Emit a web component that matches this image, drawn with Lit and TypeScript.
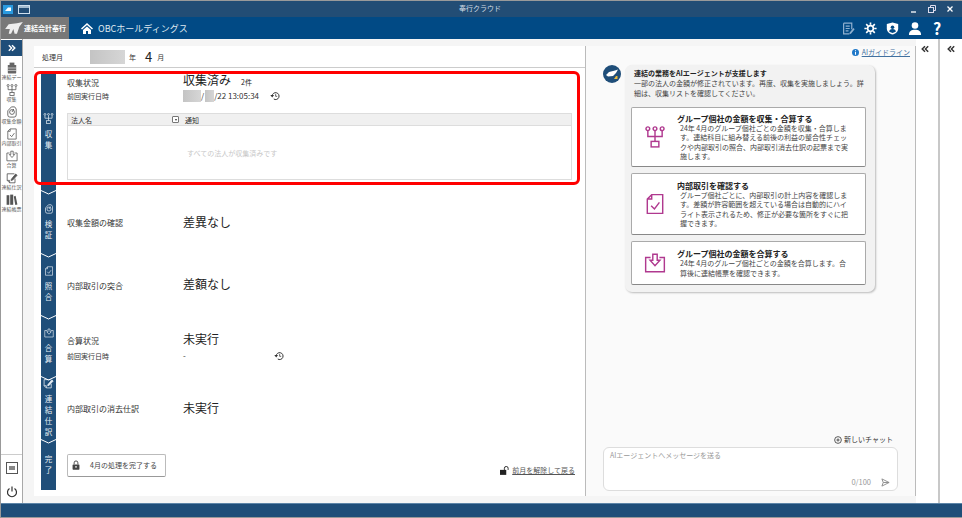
import { LitElement, html, css, svg } from "lit";
import { customElement } from "lit/decorators.js";

const tree = (s: number) => html`<svg width=${s} height=${s} viewBox="0 0 20 20" fill="none" stroke="currentColor" stroke-width="1.3">
  <circle cx="3.5" cy="2.5" r="1.7" /><circle cx="10" cy="2.5" r="1.7" /><circle cx="16.5" cy="2.5" r="1.7" />
  <path d="M3.5 4.5V9.5H16.5V4.5M10 4.5V14" /><rect x="6.5" y="14" width="7" height="5" />
</svg>`;
const docCheck = (s: number) => html`<svg width=${s} height=${s} viewBox="0 0 20 20" fill="none" stroke="currentColor" stroke-width="1.3">
  <path d="M7 1.5H17V18.5H3V5.5Z M7 1.5V5.5H3" /><path d="M6.5 11.5L9.5 14.5L14 8.5" />
</svg>`;
const tray = (s: number) => html`<svg width=${s} height=${s} viewBox="0 0 20 20" fill="none" stroke="currentColor" stroke-width="1.3">
  <path d="M6 5H1.5V18H18.5V5H14" /><path d="M8 2H12V7.5H14.5L10 12.5L5.5 7.5H8Z" />
</svg>`;
const gauge = (s: number) => html`<svg width=${s} height=${s} viewBox="0 0 20 20" fill="none" stroke="currentColor" stroke-width="1.4">
  <path d="M9 1.5H14.5L17 5V15A3.5 3.5 0 0 1 13.5 18.5H6.5A3.5 3.5 0 0 1 3 15V8Z" /><circle cx="10" cy="10" r="4" /><path d="M10 10L13 5" />
</svg>`;
const pen = (s: number) => html`<svg width=${s} height=${s} viewBox="0 0 20 20" fill="none" stroke="currentColor" stroke-width="1.4">
  <path d="M14 3H2V14L6 18H15V11" /><path d="M2 14H6V18" /><path d="M9 12L16 3.5L18.5 5.5L11 13.5L8.5 14Z" fill="currentColor" />
</svg>`;
const books = (s: number) => html`<svg width=${s} height=${s} viewBox="0 0 20 20" fill="currentColor">
  <rect x="1" y="2" width="4.5" height="16" /><rect x="7" y="1" width="5" height="17" /><path d="M13 4L16 3L19 17.5L15.5 18.5Z" />
</svg>`;
const box = (s: number) => html`<svg width=${s} height=${s} viewBox="0 0 20 20" fill="#666">
  <rect x="6" y="1" width="8" height="4" /><rect x="3" y="5" width="14" height="14" rx="1" /><path d="M3 10H17M3 14H17" stroke="#fff" />
</svg>`;
const refresh = html`<svg width="10" height="10" viewBox="0 0 16 16" fill="none" stroke="#333" stroke-width="1.6">
  <path d="M3.5 8A5.5 5.5 0 1 1 6 12.8" /><path d="M0.5 6.5H6.5L3.5 10.5Z" fill="#333" stroke="none" /><path d="M9 5V8.5H11.5" stroke-width="1.2" />
</svg>`;
const lock = (s: number) => html`<svg width=${s} height=${s} viewBox="0 0 16 16" fill="#444">
  <rect x="2.5" y="7" width="11" height="8.5" rx="1" /><path d="M5 7V4.5A3 3 0 0 1 11 4.5V7" fill="none" stroke="#444" stroke-width="1.5" /><circle cx="8" cy="11" r="1.3" fill="#fff" />
</svg>`;
const chevL = html`<svg width="8" height="8" viewBox="0 0 10 10" fill="none" stroke="#333" stroke-width="1.8">
  <path d="M5 1.5L1.5 5L5 8.5M9 1.5L5.5 5L9 8.5" />
</svg>`;

const navItems = [
  { icon: box, label: "連結デー" },
  { icon: tree, label: "収集" },
  { icon: gauge, label: "収集金額" },
  { icon: docCheck, label: "内部取引" },
  { icon: tray, label: "合算" },
  { icon: pen, label: "連結仕訳" },
  { icon: books, label: "連結帳票" },
];

const actions = [
  {
    icon: tree,
    title: "グループ個社の金額を収集・合算する",
    text: "24年 4月のグループ個社ごとの金額を収集・合算します。連結科目に組み替える前後の利益の整合性チェックや内部取引の照合、内部取引消去仕訳の起票まで実施します。",
    h: 60,
  },
  {
    icon: docCheck,
    title: "内部取引を確認する",
    text: "グループ個社ごとに、内部取引の計上内容を確認します。差額が許容範囲を超えている場合は自動的にハイライト表示されるため、修正が必要な箇所をすぐに把握できます。",
    h: 62,
  },
  {
    icon: tray,
    title: "グループ個社の金額を合算する",
    text: "24年 4月のグループ個社ごとの金額を合算します。合算後に連結帳票を確認できます。",
    h: 44,
  },
];

@customElement("app-root")
class AppRoot extends LitElement {
  static styles = css`
    :host {
      display: flex;
      flex-direction: column;
      height: 518px;
      width: 962px;
      overflow: hidden;
      font-family: "Noto Sans CJK JP", "Noto Sans", sans-serif;
      color: #333;
      font-size: 8px;
      background: #fff;
      box-sizing: border-box;
      border-left: 1px solid #999;
      border-bottom: 1px solid #999;
    }
    svg {
      display: block;
      flex: none;
    }
    .titlebar {
      height: 17px;
      background: #224d75;
      border-top: 1px solid #9a9a9a;
      box-sizing: border-box;
      display: flex;
      align-items: center;
      padding: 0 3px 0 2px;
      gap: 5px;
      color: #d5dde5;
      font-size: 7px;
      position: relative;
    }
    .title {
      position: absolute;
      left: 458px;
      top: 2px;
    }
    .winbtns {
      margin-left: auto;
      display: flex;
      gap: 10px;
      padding-right: 5px;
    }
    .appbar {
      height: 22px;
      background: #014a85;
      display: flex;
      align-items: center;
      color: #dfe8f0;
    }
    .logo {
      width: 68px;
      height: 22px;
      background: #787878;
      color: #fff;
      font-weight: 700;
      font-size: 7px;
      display: flex;
      align-items: center;
      gap: 1px;
      padding-left: 4px;
      box-sizing: border-box;
      white-space: nowrap;
    }
    .company {
      font-size: 9px;
      margin-left: 5px;
    }
    .home {
      margin-left: 12px;
    }
    .tools {
      margin-left: auto;
      display: flex;
      align-items: center;
      gap: 9px;
      padding-right: 19px;
      color: #fff;
    }
    .tools .help {
      font-size: 16px;
      font-weight: 700;
      width: 12px;
      text-align: center;
      line-height: 16px;
    }
    .body {
      flex: 1;
      display: flex;
      min-height: 0;
    }
    .nav {
      width: 21px;
      flex: none;
      border-right: 1px solid #a8a8a8;
      display: flex;
      flex-direction: column;
      background: #fff;
    }
    .nav-toggle {
      height: 16px;
      background: #1f4e79;
      color: #fff;
      display: flex;
      align-items: center;
      justify-content: center;
      margin-top: 1px;
    }
    .nav-items {
      padding-top: 6px;
      display: flex;
      flex-direction: column;
      gap: 1px;
    }
    .nav-item {
      height: 21px;
      display: flex;
      flex-direction: column;
      align-items: center;
      color: #555;
      font-size: 5px;
      line-height: 6px;
      white-space: nowrap;
    }
    .nav-bottom {
      margin-top: auto;
      border-top: 1px solid #ccc;
      height: 49px;
      display: flex;
      flex-direction: column;
      align-items: center;
      padding-top: 7px;
      gap: 12px;
      box-sizing: border-box;
    }
    .work {
      display: flex;
      background: #f5f5f5;
      padding: 7px 0 7px 11px;
      width: 893px;
      flex: none;
      box-sizing: border-box;
    }
    .main {
      width: 552px;
      flex: none;
      background: #fff;
      display: flex;
      flex-direction: column;
      padding: 0 6px 0 7px;
      box-sizing: border-box;
      position: relative;
      border-right: 1px solid #bbb;
    }
    .month {
      height: 21px;
      border-bottom: 1px solid #ccc;
      margin: 0 -6px 0 -7px;
      padding-left: 8px;
      display: flex;
      align-items: center;
      font-size: 7px;
    }
    .blur {
      display: inline-block;
      background: linear-gradient(90deg, #c4c4c4, #d6d6d6);
    }
    .blur.year {
      width: 35px;
      height: 14px;
      margin: 0 4px 0 27px;
    }
    .month b {
      font-weight: 400;
      font-size: 13px;
      margin: 0 5px 0 9px;
      color: #222;
    }
    .steps {
      margin-top: 5px;
      display: flex;
      flex-direction: column;
    }
    .row {
      display: flex;
    }
    .step {
      width: 15px;
      flex: none;
      background: #1f4e79;
      color: #e6edf3;
      display: flex;
      flex-direction: column;
      align-items: center;
      justify-content: center;
      position: relative;
      font-size: 7.5px;
      gap: 4px;
      padding-bottom: 2px;
      box-sizing: border-box;
    }
    .step .chev {
      position: absolute;
      top: -1px;
      left: 0;
    }
    .step .chars {
      display: flex;
      flex-direction: column;
      align-items: center;
    }
    .step .chars span {
      display: block;
      height: 11px;
      line-height: 11px;
    }
    .content {
      flex: 1;
      padding-left: 11px;
      display: flex;
      flex-direction: column;
      justify-content: center;
      min-width: 0;
    }
    .line {
      display: grid;
      grid-template-columns: 116px 1fr;
      align-items: center;
    }
    .label {
      font-size: 8px;
      line-height: 11px;
    }
    .sub {
      font-size: 7px;
      line-height: 10px;
    }
    .status {
      font-size: 12px;
      line-height: 16px;
      padding-bottom: 2px;
      color: #222;
    }
    .count {
      font-size: 7px;
      margin-left: 10px;
    }
    .first {
      justify-content: flex-start;
    }
    .first .line:first-child {
      margin: -1px 0 -3px;
    }
    .stamp {
      display: flex;
      align-items: center;
      font-size: 8px;
      height: 13px;
    }
    .stamp svg {
      margin-left: 11px;
    }
    .blur.d1 {
      width: 18px;
      height: 12px;
    }
    .blur.d2 {
      width: 9px;
      height: 12px;
      margin-left: 1px;
    }
    .dash {
      width: 80px;
    }
    .table {
      margin-top: 11px;
      margin-right: 7px;
      border: 1px solid #ddd;
      height: 67px;
      box-sizing: border-box;
      display: flex;
      flex-direction: column;
    }
    .thead {
      height: 11px;
      background: #f0f0f0;
      border-bottom: 1px solid #ddd;
      display: flex;
      align-items: center;
      font-size: 7px;
      padding-left: 3px;
      flex: none;
    }
    .thead .c1 {
      width: 101px;
    }
    .filter {
      width: 7px;
      height: 7px;
      border: 1px solid #777;
      border-radius: 1px;
      box-sizing: border-box;
      background: #fff;
      display: flex;
      align-items: center;
      justify-content: center;
      margin-right: 6px;
    }
    .filter::after {
      content: "";
      border: 1.5px solid transparent;
      border-top: 2px solid #333;
      border-bottom: 0;
    }
    .empty {
      flex: 1;
      color: #c8c8c8;
      font-size: 7px;
      padding-left: 119px;
      display: flex;
      align-items: center;
    }
    .finish {
      flex-direction: row;
      align-items: center;
      justify-content: flex-start;
      padding-right: 4px;
    }
    .finish button {
      width: 99px;
      height: 23px;
      background: #fff;
      border: 1px solid #bbb;
      border-bottom: 1.5px solid #999;
      border-radius: 2px;
      font: inherit;
      font-size: 7px;
      color: #444;
      display: flex;
      align-items: center;
      padding: 0 0 0 3px;
      gap: 9px;
      box-sizing: border-box;
      white-space: nowrap;
    }
    .back {
      margin-left: auto;
      display: flex;
      align-items: center;
      gap: 2px;
      font-size: 7px;
      color: #555;
      text-decoration: underline;
      margin-top: 10px;
    }
    .highlight {
      position: absolute;
      left: 0;
      top: 25px;
      width: 546px;
      height: 114px;
      border: 3px solid #f00;
      border-radius: 6px;
      box-sizing: border-box;
      pointer-events: none;
    }
    .ai {
      width: 330px;
      flex: none;
      background: #fafafa;
      border-right: 1px solid #bbb;
      display: flex;
      flex-direction: column;
      padding: 0 17px 5px 17px;
      box-sizing: border-box;
    }
    .guide {
      align-self: flex-end;
      display: flex;
      align-items: center;
      gap: 3px;
      font-size: 7px;
      line-height: 10px;
      color: #41709f;
      text-decoration: underline;
      margin: 1px -12px 8px 0;
    }
    .chat {
      display: flex;
      align-items: flex-start;
      gap: 4px;
    }
    .bubble {
      width: 250px;
      background: #f2f2f2;
      border-radius: 7px;
      box-shadow: 1px 1px 2px #bbb;
      padding: 3px 9px 7px 9px;
      box-sizing: border-box;
      font-size: 7px;
      line-height: 10px;
      color: #444;
    }
    .bubble strong {
      display: block;
      color: #222;
      font-size: 7px;
      line-height: 10px;
    }
    .bubble .intro {
      margin-bottom: 9px;
    }
    .card {
      width: 235px;
      margin: 0 0 6px -3px;
      background: #fff;
      border: 1px solid #aaa;
      border-bottom: 1.5px solid #888;
      border-radius: 2px;
      box-sizing: border-box;
      display: grid;
      grid-template-columns: 45px 1fr;
      align-items: center;
      color: #444;
    }
    .card:last-child {
      margin-bottom: 0;
    }
    .card .ico {
      color: #b0398f;
      display: flex;
      justify-content: center;
      padding-left: 1px;
    }
    .card h4 {
      margin: 0;
      font-size: 8px;
      line-height: 11px;
      color: #222;
      font-weight: 700;
    }
    .card p {
      margin: 0 12px 0 3px;
      font-size: 7px;
      line-height: 9.4px;
    }
    .new-chat {
      margin-top: auto;
      align-self: flex-end;
      display: flex;
      align-items: center;
      gap: 2px;
      font-size: 7px;
      line-height: 11px;
      margin-right: 5px;
      margin-bottom: 2px;
    }
    .input {
      height: 44px;
      width: 295px;
      background: #fff;
      border: 1px solid #ddd;
      border-radius: 6px;
      box-sizing: border-box;
      font-size: 7px;
      color: #999;
      padding: 2px 6px 3px;
      display: flex;
      flex-direction: column;
      line-height: 10px;
    }
    .counter {
      margin-top: auto;
      align-self: flex-end;
      display: flex;
      align-items: center;
      font-size: 7.5px;
      gap: 10px;
      padding-right: 1px;
    }
    .side {
      flex: none;
      display: flex;
      justify-content: center;
      padding-top: 6px;
      background: #fff;
      box-sizing: border-box;
    }
    .side.a {
      width: 24px;
      border-right: 2px solid #c8c8c8;
      padding-right: 4px;
    }
    .side.b {
      flex: 1;
    }
    .statusbar {
      height: 14px;
      flex: none;
      background: #1f4e79;
      border-top: 1px solid #5d85a8;
      box-sizing: border-box;
    }
  `;

  renderStep(icon: unknown, text: string, first = false) {
    return html`<div class="step">
      ${first
        ? ""
        : html`<svg class="chev" width="15" height="6" viewBox="0 0 15 6" fill="none" stroke="#fff" stroke-width="1">${svg`<path d="M0 0.5L7.5 4L15 0.5" />`}</svg>`}
      ${icon}
      <div class="chars">${text.split("").map((c) => html`<span>${c}</span>`)}</div>
    </div>`;
  }

  render() {
    return html`
      <div class="titlebar">
        <svg width="10" height="9" viewBox="0 0 10 9"><rect width="10" height="9" fill="#2a9be0" /><path d="M2 6L5 2.5H8V6Z" fill="#fff" /></svg>
        <svg width="12" height="9" viewBox="0 0 12 9" fill="none" stroke="#cfe0ee"><rect x="0.5" y="0.5" width="11" height="8" /><path d="M0.5 2H11.5" stroke-width="1.5" /></svg>
        <span class="title">奉行クラウド</span>
        <div class="winbtns">
          <svg width="8" height="8" viewBox="0 0 8 8" stroke="#fff" fill="none"><path d="M1 7H6" stroke-width="1.3" /></svg>
          <svg width="8" height="8" viewBox="0 0 8 8" stroke="#dde" fill="none"><rect x="0.5" y="2.5" width="5" height="5" /><path d="M2.5 2.5V0.5H7.5V5.5H5.5" /></svg>
          <svg width="8" height="8" viewBox="0 0 8 8" stroke="#fff" fill="none"><path d="M1.5 1.5L6.5 6.5M6.5 1.5L1.5 6.5" stroke-width="1.3" /></svg>
        </div>
      </div>
      <div class="appbar">
        <div class="logo">
          <svg width="18" height="13" viewBox="0 0 15 11" fill="#eee"><path d="M0 6L3 2L10 1L15 0L12 4L10 10H8L7 6L5 10H3L4 6Z" /></svg>
          <span>連結会計奉行</span>
        </div>
        <svg class="home" width="12" height="11" viewBox="0 0 12 11" fill="#fff"><path d="M6 0L12 5.5L11 6.5L6 2L1 6.5L0 5.5Z" /><path d="M2 7L6 3.5L10 7V11H7V8H5V11H2Z" /></svg>
        <span class="company">OBCホールディングス</span>
        <div class="tools">
          <svg width="13" height="13" viewBox="0 0 16 16" fill="none" stroke="#8fb0cf" stroke-width="1.5"><path d="M2 1.5H12V9M2 1.5V14.5H9M4.5 5H9.5M4.5 8H9.5M4.5 11H8" /><path d="M9.5 13L14 7.5L15.5 9L11 14.5L9 15Z" fill="#8fb0cf" stroke="none" /></svg>
          <svg width="13" height="13" viewBox="0 0 16 16" fill="none" stroke="#fff"><circle cx="8" cy="8" r="3.5" stroke-width="2" /><path d="M8 0.5V3.5M8 12.5V15.5M0.5 8H3.5M12.5 8H15.5M2.7 2.7L4.8 4.8M11.2 11.2L13.3 13.3M13.3 2.7L11.2 4.8M4.8 11.2L2.7 13.3" stroke-width="2" /></svg>
          <svg width="13" height="13" viewBox="0 0 16 16" fill="#fff"><path d="M8 0.5L15 2.5V8C15 12 11.5 14.5 8 15.5C4.5 14.5 1 12 1 8V2.5Z" /><circle cx="8" cy="6.5" r="2.2" fill="#014a85" /><path d="M4 12A4 3.5 0 0 1 12 12L8 13.5Z" fill="#014a85" /></svg>
          <svg width="14" height="13" viewBox="0 0 16 15" fill="#fff"><circle cx="8" cy="4" r="3.8" /><path d="M1 15C1 10.5 4 9 8 9S15 10.5 15 15Z" /></svg>
          <span class="help">?</span>
        </div>
      </div>
      <div class="body">
        <div class="nav">
          <div class="nav-toggle">
            <svg width="8" height="8" viewBox="0 0 10 10" fill="none" stroke="#fff" stroke-width="1.8"><path d="M1 1.5L4.5 5L1 8.5M5 1.5L8.5 5L5 8.5" /></svg>
          </div>
          <div class="nav-items">
            ${navItems.map((n) => html`<div class="nav-item">${n.icon(12)}<span>${n.label}</span></div>`)}
          </div>
          <div class="nav-bottom">
            <svg width="12" height="12" viewBox="0 0 12 12" fill="none" stroke="#555"><rect x="0.5" y="0.5" width="11" height="11" /><rect x="3" y="4" width="6" height="4" fill="#888" stroke="none" /></svg>
            <svg width="12" height="12" viewBox="0 0 12 12" fill="none" stroke="#333" stroke-width="1.2"><path d="M3.5 2.5A4.5 4.5 0 1 0 8.5 2.5M6 0.5V5.5" /></svg>
          </div>
        </div>
        <div class="work">
          <div class="main">
            <div class="month">
              処理月<span class="blur year"></span>年<b>4</b>月
            </div>
            <div class="steps">
              <div class="row" style="height:118px">
                ${this.renderStep(tree(11), "収集", true)}
                <div class="content first">
                  <div class="line"><span class="label">収集状況</span><span class="status">収集済み<span class="count">2件</span></span></div>
                  <div class="line">
                    <span class="sub">前回実行日時</span>
                    <span class="stamp"><i class="blur d1"></i>/<i class="blur d2"></i>/22 13:05:34${refresh}</span>
                  </div>
                  <div class="table">
                    <div class="thead"><span class="c1">法人名</span><i class="filter"></i><span>通知</span></div>
                    <div class="empty">すべての法人が収集済みです</div>
                  </div>
                </div>
              </div>
              <div class="row" style="height:63px">
                ${this.renderStep(gauge(10), "検証")}
                <div class="content"><div class="line"><span class="label">収集金額の確認</span><span class="status">差異なし</span></div></div>
              </div>
              <div class="row" style="height:62px">
                ${this.renderStep(docCheck(10), "照合")}
                <div class="content"><div class="line"><span class="label">内部取引の突合</span><span class="status">差額なし</span></div></div>
              </div>
              <div class="row" style="height:61px">
                ${this.renderStep(tray(10), "合算")}
                <div class="content">
                  <div class="line"><span class="label">合算状況</span><span class="status">未実行</span></div>
                  <div class="line"><span class="sub">前回実行日時</span><span class="stamp"><span class="dash">-</span>${refresh}</span></div>
                </div>
              </div>
              <div class="row" style="height:63px">
                ${this.renderStep(pen(11), "連結仕訳")}
                <div class="content"><div class="line"><span class="label">内部取引の消去仕訳</span><span class="status">未実行</span></div></div>
              </div>
              <div class="row" style="height:50px">
                ${this.renderStep("", "完了")}
                <div class="content finish">
                  <button>${lock(10)}4月の処理を完了する</button>
                  <span class="back">
                    <svg width="10" height="9" viewBox="0 0 16 14" fill="#222"><rect x="0" y="6" width="10" height="8" /><path d="M7 6V3.5A3 3 0 0 1 13 3.5V6" fill="none" stroke="#222" stroke-width="1.5" /></svg>
                    前月を解除して戻る
                  </span>
                </div>
              </div>
            </div>
            <div class="highlight"></div>
          </div>
          <div class="ai">
            <span class="guide">
              <svg width="7" height="7" viewBox="0 0 8 8"><circle cx="4" cy="4" r="4" fill="#1f78c8" /><path d="M4 3.5V6.5M4 1.5V2.5" stroke="#fff" stroke-width="1.2" /></svg>
              AIガイドライン
            </span>
            <div class="chat">
              <svg width="18" height="18" viewBox="0 0 18 18"><circle cx="9" cy="9" r="9" fill="#1f4e79" /><path d="M3 10L6 7L12 5.5L15 4.5L13 8L10 11L5 11.5Z" fill="#fff" /><path d="M11 14L13 11H14.5V14" fill="#e8b93c" /></svg>
              <div class="bubble">
                <div class="intro">
                  <strong>連結の業務をAIエージェントが支援します</strong>
                  一部の法人の金額が修正されています。再度、収集を実施しましょう。詳細は、収集リストを確認してください。
                </div>
                ${actions.map(
                  (a) => html`<div class="card" style="height:${a.h}px">
                    <div class="ico">${a.icon(22)}</div>
                    <div>
                      <h4>${a.title}</h4>
                      <p>${a.text}</p>
                    </div>
                  </div>`
                )}
              </div>
            </div>
            <span class="new-chat">
              <svg width="8" height="8" viewBox="0 0 10 10" fill="none" stroke="#333"><circle cx="5" cy="5" r="4.2" /><path d="M5 3V7M3 5H7" /></svg>
              新しいチャット
            </span>
            <div class="input">
              AIエージェントへメッセージを送る
              <div class="counter">
                0/100
                <svg width="9" height="9" viewBox="0 0 10 10" fill="none" stroke="#888"><path d="M1 1L9 5L1 9L2.5 5ZM2.5 5H9" /></svg>
              </div>
            </div>
          </div>
        </div>
        <div class="side a">${chevL}</div>
        <div class="side b">${chevL}</div>
      </div>
      <div class="statusbar"></div>
    `;
  }
}
